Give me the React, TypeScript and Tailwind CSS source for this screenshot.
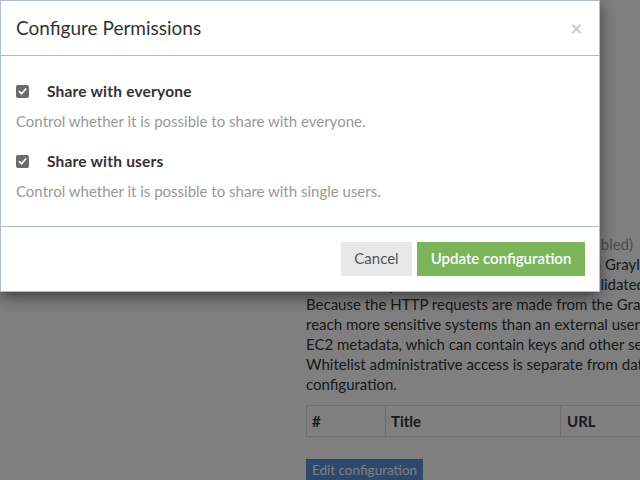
import React from "react";

function Check() {
  return (
    <span className="flex h-[13px] w-[13px] shrink-0 items-center justify-center rounded-[2px] bg-[#6b6b6b]">
      <svg width="9" height="9" viewBox="0 0 10 10" fill="none">
        <path d="M1.5 5.2 L4 7.6 L8.6 2.2" stroke="white" strokeWidth="1.8" strokeLinecap="round" strokeLinejoin="round" />
      </svg>
    </span>
  );
}

export default function App() {
  const font = { fontFamily: "Lato, 'Noto Sans', sans-serif" };
  return (
    <div className="relative h-[480px] w-[640px] overflow-hidden bg-white" style={font}>
      {/* background page */}
      <div className="pl-[306px] pt-[234px] text-[15px] leading-[20px] text-[#333]">
        <div className="flex w-[327px] justify-end whitespace-nowrap text-[#999]">URL Whitelist Configuration (enabled)</div>
        <div className="flex w-[350px] justify-end whitespace-nowrap">Requests can be made to hosts from within Graylog</div>
        <div className="flex w-[339px] justify-end whitespace-nowrap">Only URLs that match entries are validated</div>
        <div className="whitespace-nowrap">Because the HTTP requests are made from the Graylog server, they might</div>
        <div className="whitespace-nowrap">reach more sensitive systems than an external user would have</div>
        <div className="whitespace-nowrap">EC2 metadata, which can contain keys and other secrets</div>
        <div className="whitespace-nowrap">Whitelist administrative access is separate from data sources</div>
        <div className="whitespace-nowrap">configuration.</div>
        <div className="mt-[11px] flex h-[32px] w-[400px] border border-[#ddd] font-bold">
          <div className="flex w-[79px] items-center border-r border-[#ddd] pl-[5px]">#</div>
          <div className="flex w-[175px] items-center border-r border-[#ddd] pl-[5px]">Title</div>
          <div className="flex items-center pl-[6px]">URL</div>
        </div>
        <div className="mt-[22px] flex h-[24px] w-[117px] items-center justify-center whitespace-nowrap bg-[#5d93dd] pb-[2px] text-[13.5px] text-white">
          Edit configuration
        </div>
      </div>

      {/* overlay */}
      <div className="absolute inset-0 bg-black/50" />

      {/* modal */}
      <div className="absolute left-0 top-0 w-[600px] border border-[#b1bccb] bg-white shadow-[0_5px_15px_rgba(0,0,0,0.5)]">
        <div className="flex h-[55px] items-center justify-between border-b border-[#b1bccb] px-[15px]">
          <h4 className="text-[19px] leading-[24px] text-[#333]">Configure Permissions</h4>
          <span className="mr-[2px] text-[20px] font-bold leading-none text-[#ccc]">×</span>
        </div>
        <div className="px-[15px] pb-[25px] pt-[25px] text-[15px] leading-[20px]">
          <div className="flex h-[20px] items-center gap-[18px]">
            <Check />
            <span className="text-[15.5px] font-bold tracking-[0.2px] text-[#333]">Share with everyone</span>
          </div>
          <div className="mt-[10px] text-[#999]">Control whether it is possible to share with everyone.</div>
          <div className="mt-[20px] flex h-[20px] items-center gap-[18px]">
            <Check />
            <span className="text-[15.5px] font-bold tracking-[0.2px] text-[#333]">Share with users</span>
          </div>
          <div className="mt-[10px] text-[#999]">Control whether it is possible to share with single users.</div>
        </div>
        <div className="flex justify-end gap-[5px] border-t border-[#b1bccb] px-[14px] py-[15px]">
          <button className="h-[34px] w-[71px] bg-[#e8e8e8] pb-[2px] text-[15px] text-[#555]">Cancel</button>
          <button className="h-[34px] w-[168px] bg-[#7ab55c] pb-[2px] text-[15px] font-semibold text-white">Update configuration</button>
        </div>
      </div>
    </div>
  );
}
